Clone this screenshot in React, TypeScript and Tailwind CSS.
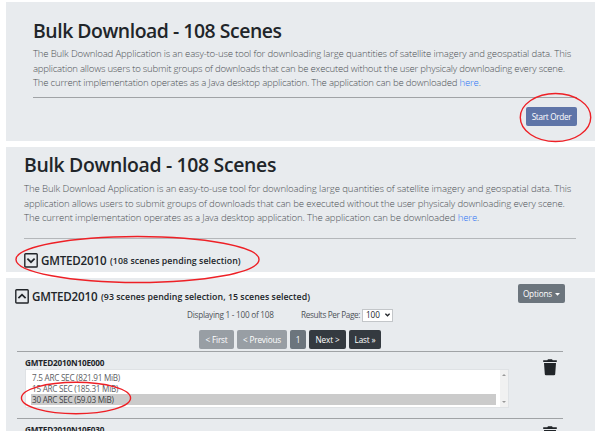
import type { ReactNode } from "react";

function Ring({ box }: { box: string }) {
  return (
    <svg className={`pointer-events-none absolute overflow-visible ${box}`}>
      <ellipse cx="50%" cy="50%" rx="49.6%" ry="49%" fill="none" stroke="#ee2026" strokeWidth="1.4" />
    </svg>
  );
}

function Intro({ first, second, third }: { first: string; second: string; third: string }) {
  return (
    <div className="text-[9.6px] leading-[14.7px] font-[350] text-[#4e5256] whitespace-nowrap">
      <p className={first}>
        The Bulk Download Application is an easy-to-use tool for downloading large quantities of satellite imagery and geospatial data. This
      </p>
      <p className={second}>
        application allows users to submit groups of downloads that can be executed without the user physicaly downloading every scene.
      </p>
      <p className={third}>
        The current implementation operates as a Java desktop application. The application can be downloaded{" "}
        <a className="text-[#2f76f5]">here</a>.
      </p>
    </div>
  );
}

function Toggle({ open }: { open: boolean }) {
  return (
    <svg className="h-[15px] w-[14px] shrink-0" viewBox="0 0 14 15" fill="none" stroke="#212529">
      <rect x="0.8" y="0.8" width="12.4" height="13.2" rx="0.8" strokeWidth="1.4" />
      <path d={open ? "M3.4 9.1 7 5.6l3.6 3.5" : "M3.4 5.7 7 9.2l3.6-3.5"} strokeWidth="1.7" />
    </svg>
  );
}

function PageButton({ className, children }: { className: string; children: ReactNode }) {
  return (
    <button className={`flex h-[19px] items-center justify-center rounded-[2px] pt-px text-[8.2px] tracking-[-0.15px] whitespace-nowrap text-white ${className}`}>
      {children}
    </button>
  );
}

function Trash() {
  return (
    <svg className="h-[17px] w-[14px]" viewBox="0 0 14 17" fill="#212529">
      <path d="M0.2 1.2H4.3L5 0.2H9L9.7 1.2H13.8V3H0.2ZM1 4H13L12.2 15.2Q12.1 16.3 11 16.3H3Q1.9 16.3 1.8 15.2Z" />
    </svg>
  );
}

export default function App() {
  return (
    <div className="relative h-[431px] w-[602px] overflow-hidden bg-white pl-[6px] pt-[2px] font-['Open_Sans','Noto_Sans',sans-serif] text-[#212529]">
      <section className="h-[139px] w-[589px] bg-[#e8ebee] pl-[27px] pr-[18px] pt-[15px]">
        <h1 className="h-[30px] text-[19.4px] leading-[27px] font-semibold whitespace-nowrap tracking-[-0.46px]">Bulk Download - 108 Scenes</h1>
        <Intro first="tracking-[-0.17px]" second="tracking-[-0.22px]" third="tracking-[-0.21px]" />
        <div className="mt-[6px] h-px bg-[#a0a3a6]" />
        <div className="mt-[9px] flex justify-end">
          <PageButton className="w-[51px] bg-[#5f75a8]"><span className="tracking-[-0.3px]">Start Order</span></PageButton>
        </div>
      </section>

      <section className="mt-[6px] h-[125px] w-[589px] bg-[#e8ebee] pl-[18px] pr-[19px] pt-[4px]">
        <h1 className="h-[31px] text-[19.4px] leading-[27px] font-semibold whitespace-nowrap tracking-[-0.32px]">Bulk Download - 108 Scenes</h1>
        <Intro first="tracking-[-0.1px]" second="tracking-[-0.15px]" third="tracking-[-0.14px]" />
        <div className="mt-[12px] h-px bg-[#b4b7ba]" />
        <div className="mt-[13px] flex items-center gap-[3px] whitespace-nowrap">
          <Toggle open={false} />
          <span className="w-[66px] text-[11.6px] leading-[15px] font-semibold tracking-[-0.2px]">GMTED2010</span>
          <span className="pt-[2px] text-[8.8px] leading-[15px] font-semibold tracking-[0.06px]">(108 scenes pending selection)</span>
        </div>
      </section>

      <section className="mt-[6px] h-[153px] w-[589px] overflow-hidden bg-[#e8ebee] pl-[9px] pr-[30px]">
        <div className="flex h-[29px] items-start justify-between pt-[6px]">
          <div className="flex items-center gap-[3px] pt-[4px] whitespace-nowrap">
            <Toggle open />
            <span className="w-[66px] text-[11.6px] leading-[15px] font-semibold tracking-[-0.2px]">GMTED2010</span>
            <span className="pt-[2px] text-[8.8px] leading-[15px] font-semibold tracking-[0.04px]">(93 scenes pending selection, 15 scenes selected)</span>
          </div>
          <PageButton className="w-[47px] gap-[3px] bg-[#6c757d]">
            Options
            <svg className="h-[3px] w-[5px]" viewBox="0 0 5 3" fill="white"><path d="M0 0h5L2.5 2.7z" /></svg>
          </PageButton>
        </div>
        <div className="flex h-[16px] items-center pl-[172px] text-[8.2px] tracking-[-0.25px] whitespace-nowrap text-[#4d5257]">
          <span className="w-[114px]">Displaying 1 - 100 of 108</span>
          <span className="w-[61px] tracking-[-0.36px]">Results Per Page:</span>
          <span className="flex h-[13px] w-[31px] items-center justify-between border border-[#c3c6c9] bg-white pr-[2px] pl-[3px] tracking-[-0.1px] text-[#212529]">
            100
            <svg className="h-[4px] w-[5px]" viewBox="0 0 5 4" fill="none" stroke="#212529" strokeWidth="1.3"><path d="M0.4 0.7 2.5 2.8 4.6 0.7" /></svg>
          </span>
        </div>
        <div className="mt-[7px] flex gap-[3px] pl-[184px]">
          <PageButton className="w-[35px] bg-[#989ea4]">&lt; First</PageButton>
          <PageButton className="w-[50px] bg-[#989ea4]">&lt; Previous</PageButton>
          <PageButton className="w-[16px] bg-[#6c757d]">1</PageButton>
          <PageButton className="w-[37px] bg-[#343a40]">Next &gt;</PageButton>
          <PageButton className="w-[32px] bg-[#343a40]">Last »</PageButton>
        </div>
        <div className="mt-[2px] ml-[2px] h-px w-[546px] bg-[#a0a3a6]" />
        <div className="flex h-[66px] justify-between pr-[8px] pl-[10px]">
          <div className="pt-[5px]">
            <div className="h-[12px] text-[8.2px] leading-[12px] font-bold tracking-[-0.2px]">GMTED2010N10E000</div>
            <div className="flex h-[39px] w-[484px] justify-between border border-[#dfe2e5] bg-white text-[8.2px] leading-[11px] tracking-[-0.28px] text-[#5c6064]">
              <div className="w-[470px] pt-[2px] pl-[5px] whitespace-nowrap">
                <div className="h-[11px] pl-px">7.5 ARC SEC (821.91 MiB)</div>
                <div className="h-[11px] pl-px">15 ARC SEC (185.31 MiB)</div>
                <div className="h-[11px] bg-[#cbcbcb] pl-px text-[#3e4144]">30 ARC SEC (59.03 MiB)</div>
              </div>
              <div className="flex w-[8px] flex-col items-center justify-between bg-[#f1f1f1] py-[4px]">
                <svg className="h-[2px] w-[4px]" viewBox="0 0 4 2" fill="#999"><path d="M0 2 2 0l2 2z" /></svg>
                <svg className="h-[2px] w-[4px]" viewBox="0 0 4 2" fill="#999"><path d="M0 0h4L2 2z" /></svg>
              </div>
            </div>
          </div>
          <div className="pt-[7px]"><Trash /></div>
        </div>
        <div className="ml-[2px] h-px w-[546px] bg-[#a0a3a6]" />
        <div className="flex justify-between pr-[8px] pl-[10px]">
          <div className="pt-[5px] text-[8.2px] leading-[12px] font-bold tracking-[-0.2px]">GMTED2010N10E030</div>
          <div className="pt-[7px]"><Trash /></div>
        </div>
      </section>

      <Ring box="left-[520px] top-[93px] w-[71px] h-[49px]" />
      <Ring box="left-[15px] top-[236px] w-[245px] h-[47px]" />
      <Ring box="left-[21px] top-[382px] w-[110px] h-[32px]" />
    </div>
  );
}
